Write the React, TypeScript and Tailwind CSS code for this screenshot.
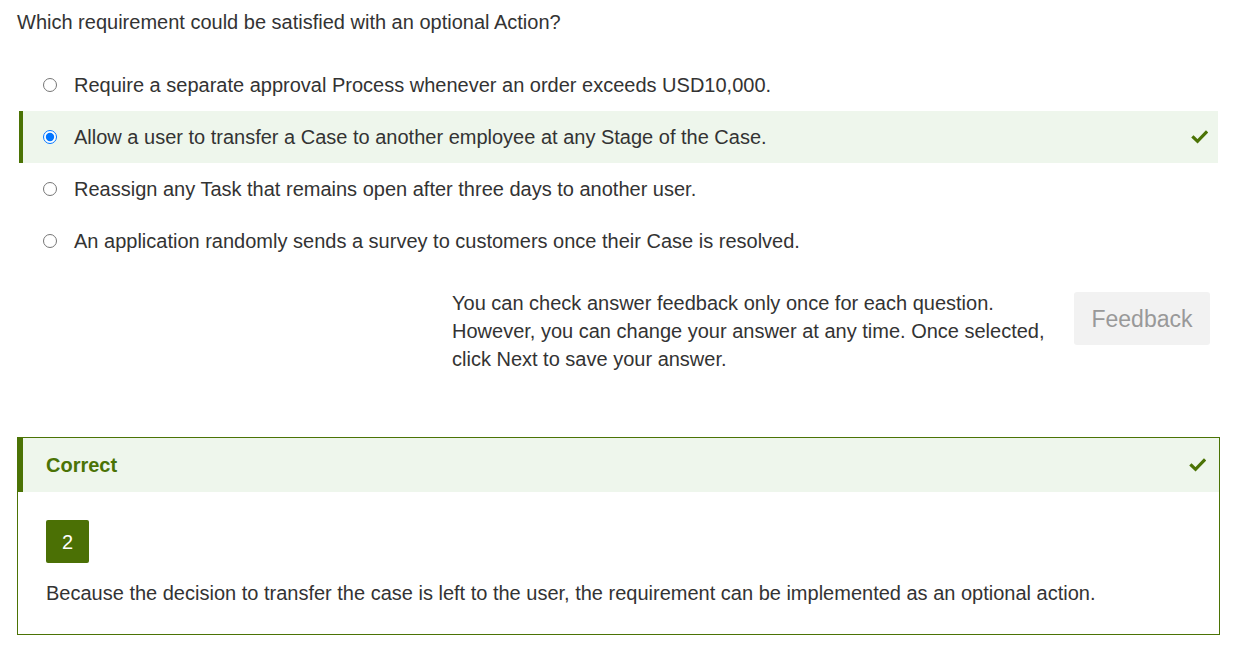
const OPTIONS = [
  "Require a separate approval Process whenever an order exceeds USD10,000.",
  "Allow a user to transfer a Case to another employee at any Stage of the Case.",
  "Reassign any Task that remains open after three days to another user.",
  "An application randomly sends a survey to customers once their Case is resolved.",
]

const SELECTED = 1

function Check() {
  return (
    <svg className="w-[17px] h-[14px]" viewBox="0 0 17 14" fill="none">
      <path d="M2.5 7.5l4 3.8L15 2.5" stroke="#4b7305" strokeWidth={3.2} strokeLinecap="square" />
    </svg>
  )
}

export default function App() {
  return (
    <div className="w-[1241px] h-[652px] bg-white text-[#333] font-['Liberation_Sans',Arial,sans-serif] text-[20px] leading-[28px] pl-[17px] pr-[21px] pt-[8px]">
      {/* Question */}
      <p className="h-[28px]">Which requirement could be satisfied with an optional Action?</p>

      {/* Options */}
      <div className="mt-[23px] ml-[2px] mr-[2px]">
        {OPTIONS.map((opt, i) => {
          const sel = i === SELECTED
          return (
            <label
              key={i}
              className={
                sel
                  ? "flex items-center h-[52px] border-l-4 border-[#4b7305] bg-[#eef6ec] pl-[20px] pr-[10px]"
                  : "flex items-center h-[52px] border-l-4 border-transparent pl-[20px] pr-[10px]"
              }
            >
              <input
                type="radio"
                name="q"
                readOnly
                checked={sel}
                className="w-[14px] h-[14px] m-0 accent-[#0075ff]"
              />
              <span className="ml-[17px] flex-1">{opt}</span>
              {sel && <Check />}
            </label>
          )
        })}
      </div>

      {/* Feedback note */}
      <div className="flex justify-end items-start mt-[22px] pr-[10px]">
        <p className="w-[600px]">
          You can check answer feedback only once for each question.
          <br />
          However, you can change your answer at any time. Once selected,
          <br />
          click Next to save your answer.
        </p>
        <button className="mt-[3px] ml-[22px] w-[136px] h-[53px] rounded-[3px] bg-[#f2f2f2] text-[#999] text-[23px]">
          Feedback
        </button>
      </div>

      {/* Result */}
      <div className="mt-[64px] w-[1203px] border border-[#4b7305]">
        <div className="flex items-center justify-between h-[54px] border-l-[5px] border-[#4b7305] bg-[#eef6ec] pl-[23px] pr-[13px]">
          <span className="font-bold text-[#4b7305]">Correct</span>
          <Check />
        </div>
        <div className="pl-[28px] pt-[28px] pb-[27px]">
          <div className="flex items-center justify-center w-[43px] h-[43px] rounded-[2px] bg-[#4b7005] text-white">2</div>
          <p className="mt-[16px]">
            Because the decision to transfer the case is left to the user, the requirement can be implemented as an optional action.
          </p>
        </div>
      </div>
    </div>
  )
}
